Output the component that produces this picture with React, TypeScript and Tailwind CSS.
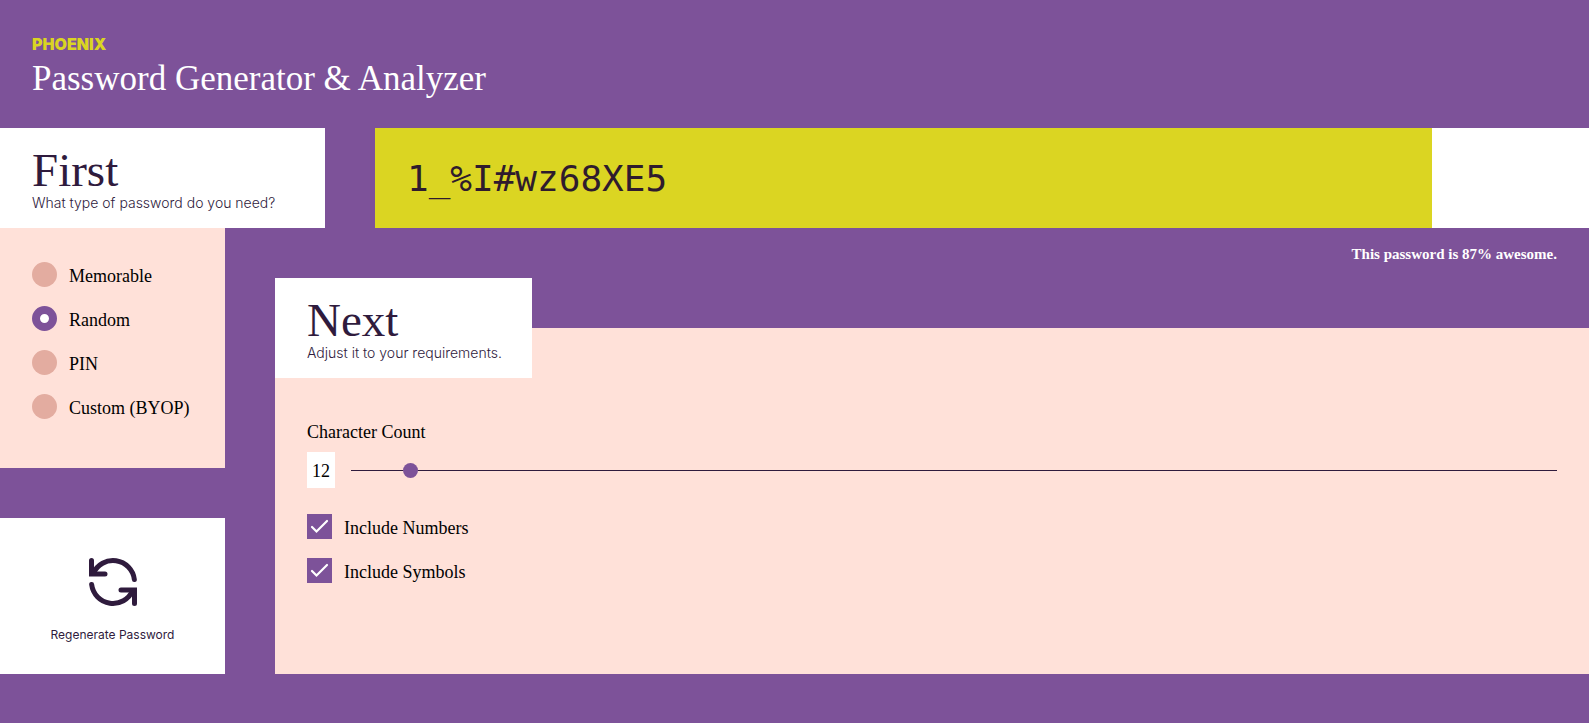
import { useState } from "react";

const passwordTypes = ["Memorable", "Random", "PIN", "Custom (BYOP)"];
const inclusions = ["Include Numbers", "Include Symbols"];

function StepCard({ title, hint, className }: { title: string; hint: string; className: string }) {
  return (
    <div className={`flex h-[100px] flex-col bg-white px-8 pt-5 text-[#2f1b3d] ${className}`}>
      <h2 className="pt-px font-['Liberation_Serif',serif] text-[47px] leading-[43px]">{title}</h2>
      <p className="text-sm leading-[22px] font-light whitespace-nowrap">{hint}</p>
    </div>
  );
}

function RegenerateIcon() {
  return (
    <svg
      className="size-12 overflow-visible"
      viewBox="0 0 48 48"
      fill="none"
      stroke="currentColor"
      strokeWidth="5"
      strokeLinecap="round"
      strokeLinejoin="miter"
      aria-hidden="true"
    >
      <path d="M2.5 2.5V16H16" />
      <path d="M45.5 45.5V32H32" />
      <path d="M4.3 15.5A21.5 21.5 0 0 1 45.35 21.5" />
      <path d="M43.7 32.5A21.5 21.5 0 0 1 2.65 26.5" />
    </svg>
  );
}

export default function App() {
  const [type, setType] = useState("Random");
  const [count, setCount] = useState(12);
  const strength = 87.1;

  return (
    <div className="min-h-screen bg-[#7d5299] pb-[49px] font-[Inter,sans-serif]">
      <header className="h-32 px-8 pt-[34px]">
        <p className="text-base leading-5 font-black text-[#dad522]">PHOENIX</p>
        <h1 className="pt-[5px] font-['Liberation_Serif',serif] text-[35px] leading-10 text-white">
          Password Generator &amp; Analyzer
        </h1>
      </header>

      <div className="flex gap-[50px]">
        <StepCard title="First" hint="What type of password do you need?" className="w-[325px] shrink-0" />
        <div className="h-[100px] flex-1 bg-white">
          <div className="flex h-full items-center bg-[#dbd522] px-8 pt-0.5" style={{ width: `${strength}%` }}>
            <output className="font-['DejaVu_Sans_Mono',monospace] text-4xl text-[#2f1b2d]">1_%I#wz68XE5</output>
          </div>
        </div>
      </div>

      <div className="flex gap-[50px]">
        <div className="flex w-[225px] shrink-0 flex-col gap-[50px]">
          <fieldset className="flex h-60 flex-col gap-[19px] bg-[#ffe1d9] px-8 pt-[34px] font-['Liberation_Serif',serif] text-lg text-black">
            {passwordTypes.map((name) => (
              <label key={name} className="flex h-[25px] items-center gap-3">
                <input
                  type="radio"
                  name="password-type"
                  checked={type === name}
                  onChange={() => setType(name)}
                  className="size-[25px] appearance-none rounded-full bg-[#e3aca0] checked:border-8 checked:border-[#7d5299] checked:bg-white"
                />
                <span className="pt-0.5">{name}</span>
              </label>
            ))}
          </fieldset>
          <button
            type="button"
            className="flex h-[156px] flex-col items-center gap-[19px] bg-white pt-10 text-xs leading-5 text-[#2f1b3d]"
          >
            <RegenerateIcon />
            Regenerate Password
          </button>
        </div>

        <div className="flex flex-1 flex-col">
          <p className="h-[100px] px-8 pt-4 text-right font-['Liberation_Serif',serif] text-[15px] leading-5 font-bold text-white">
            This password is {Math.round(strength)}% awesome.
          </p>
          <section className="flex-1 bg-[#ffe1d9] font-['Liberation_Serif',serif] text-lg text-black">
            <StepCard
              title="Next"
              hint="Adjust it to your requirements."
              className="-mt-[50px] w-[257px] font-[Inter,sans-serif]"
            />
            <div className="px-8 pt-[41px]">
              <label htmlFor="count" className="block leading-[26px]">
                Character Count
              </label>
              <div className="mt-[7px] flex items-center gap-4">
                <output htmlFor="count" className="flex h-9 w-7 items-center justify-center bg-white pt-0.5">
                  {count}
                </output>
                <input
                  id="count"
                  type="range"
                  min={8}
                  max={100}
                  value={count}
                  onChange={(e) => setCount(Number(e.target.value))}
                  className="h-[15px] flex-1 appearance-none bg-transparent [&::-webkit-slider-runnable-track]:h-px [&::-webkit-slider-runnable-track]:bg-[#2f1b3d] [&::-webkit-slider-thumb]:-mt-[7px] [&::-webkit-slider-thumb]:size-[15px] [&::-webkit-slider-thumb]:appearance-none [&::-webkit-slider-thumb]:rounded-full [&::-webkit-slider-thumb]:bg-[#7d5299]"
                />
              </div>
              <div className="mt-[26px] flex flex-col gap-[19px]">
                {inclusions.map((name) => (
                  <label key={name} className="flex h-[25px] items-center gap-3">
                    <span className="grid size-[25px]">
                      <input
                        type="checkbox"
                        defaultChecked
                        className="peer col-start-1 row-start-1 size-[25px] appearance-none bg-[#e3aca0] checked:bg-[#7d5299]"
                      />
                      <svg
                        className="pointer-events-none invisible col-start-1 row-start-1 size-[25px] peer-checked:visible"
                        viewBox="0 0 25 25"
                        fill="none"
                        stroke="white"
                        strokeWidth="2.2"
                        strokeLinecap="round"
                        strokeLinejoin="miter"
                        aria-hidden="true"
                      >
                        <path d="M5 13L9.5 17.5L20 7" />
                      </svg>
                    </span>
                    <span className="pt-0.5">{name}</span>
                  </label>
                ))}
              </div>
            </div>
          </section>
        </div>
      </div>
    </div>
  );
}
